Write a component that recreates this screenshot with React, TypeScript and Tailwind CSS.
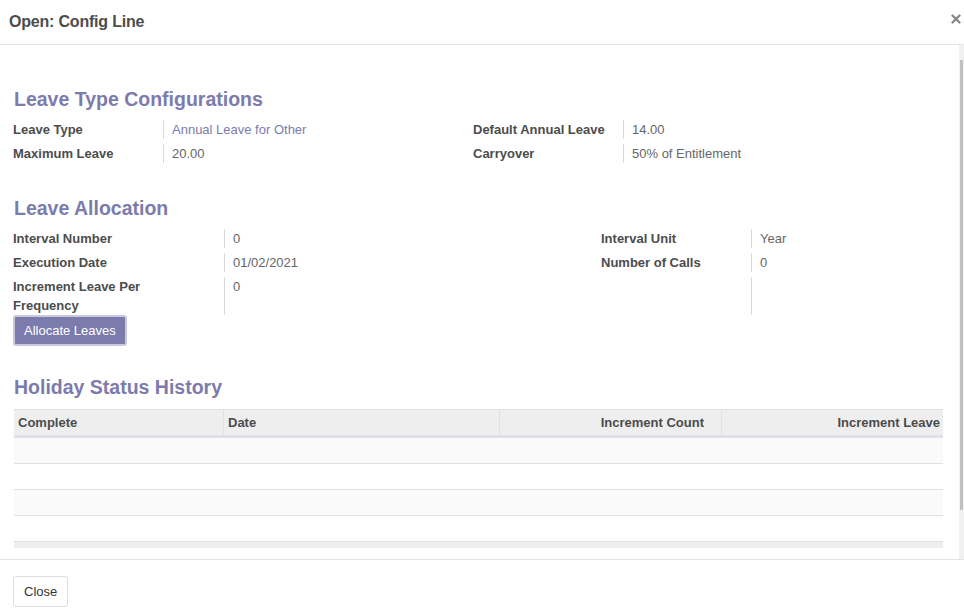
import { X } from "lucide-react";

const font = { fontFamily: '"Liberation Sans", Arial, sans-serif' };

function Field({ label, value, link }: { label: string; value: string; link?: boolean }) {
  return (
    <>
      <div className="pr-2 font-bold leading-[19px] text-[#4c4c4c]">{label}</div>
      <div
        className={`border-l border-[#d9d9d9] pl-2 leading-[19px] ${
          link ? "text-[#7c7bad]" : "text-[#666666]"
        }`}
      >
        {value}
      </div>
    </>
  );
}

export default function App() {
  return (
    <div className="flex h-[609px] w-[964px] flex-col bg-white text-[13px]" style={font}>
      {/* header */}
      <div className="flex h-[45px] shrink-0 items-center justify-between border-b border-[#e5e5e5] pl-[9px] pr-[1px]">
        <h4 className="text-[16px] font-bold tracking-[-0.2px] text-[#4c4c4c]">Open: Config Line</h4>
        <X className="mb-[7px] h-[14px] w-[14px] text-[#888888]" strokeWidth={4} />
      </div>

      {/* body */}
      <div className="flex min-h-0 flex-1">
        <div className="flex-1 pl-[13px] pr-[16px] pt-[42px]">
          <h2 className="pl-[1px] text-[19.5px] font-bold leading-6 text-[#7c7bad]">Leave Type Configurations</h2>
          <div className="mt-[8px] flex">
            <div className="grid w-[460px] grid-cols-[150px_1fr] gap-y-[5px] py-[1px]">
              <Field label="Leave Type" value="Annual Leave for Other" link />
              <Field label="Maximum Leave" value="20.00" />
            </div>
            <div className="grid flex-1 grid-cols-[150px_1fr] gap-y-[5px] py-[1px]">
              <Field label="Default Annual Leave" value="14.00" />
              <Field label="Carryover" value="50% of Entitlement" />
            </div>
          </div>

          <h2 className="mt-[32px] pl-[1px] text-[19.5px] font-bold leading-6 text-[#7c7bad]">Leave Allocation</h2>
          <div className="mt-[9px] flex">
            <div className="grid w-[588px] grid-cols-[211px_1fr] gap-y-[5px]">
              <Field label="Interval Number" value="0" />
              <Field label="Execution Date" value="01/02/2021" />
              <div className="pr-2 font-bold leading-[19px] text-[#4c4c4c]">
                Increment Leave Per
                <br />
                Frequency
              </div>
              <div className="border-l border-[#d9d9d9] pl-2 leading-[19px] text-[#666666]">0</div>
            </div>
            <div className="grid flex-1 auto-rows-min grid-cols-[150px_1fr] gap-y-[5px]">
              <Field label="Interval Unit" value="Year" />
              <Field label="Number of Calls" value="0" />
              <div className="h-[38px]" />
              <div className="h-[38px] border-l border-[#d9d9d9]" />
            </div>
          </div>
          <button className="h-[31px] rounded-[3px] border-2 border-[#c9c8dd] bg-[#7c7bad] px-[9px] text-[13px] text-white">
            Allocate Leaves
          </button>

          <h2 className="mt-[29px] pl-[1px] text-[19.5px] font-bold leading-6 text-[#7c7bad]">Holiday Status History</h2>
          <div className="mt-[10px] pl-[1px]">
            <div className="grid h-[29px] grid-cols-[210px_276px_222px_1fr] border-y border-b-[3px] border-t-[#dee2e6] border-b-[#dee2e6] bg-[#eeeeee] font-bold text-[#4c4c4c]">
              <div className="flex items-center border-r border-[#dee2e6] px-[4px]">Complete</div>
              <div className="flex items-center border-r border-[#dee2e6] px-[4px]">Date</div>
              <div className="flex items-center justify-end border-r border-[#dee2e6] px-[17px]">Increment Count</div>
              <div className="flex items-center justify-end px-[3px]">Increment Leave</div>
            </div>
            <div className="h-[26px] border-b border-[#dee2e6] bg-[#fafafa]" />
            <div className="h-[26px] border-b border-[#dee2e6] bg-white" />
            <div className="h-[26px] border-b border-[#dee2e6] bg-[#fafafa]" />
            <div className="h-[26px] border-b border-[#dee2e6] bg-white" />
            <div className="h-[6px] bg-[#eeeeee]" />
          </div>
        </div>
        {/* scrollbar */}
        <div className="w-[5px] shrink-0 bg-[#f1f1f1] pl-[1px]">
          <div className="mt-[15px] h-[450px] w-[3px] bg-[#c1c1c1]" />
        </div>
      </div>

      {/* footer */}
      <div className="flex h-[50px] shrink-0 items-start border-t border-[#e5e5e5] pl-[13px] pt-[16px]">
        <button className="h-[31px] rounded-[3px] border border-[#dddddd] bg-white px-[10px] text-[13px] text-[#333333]">
          Close
        </button>
      </div>
    </div>
  );
}
